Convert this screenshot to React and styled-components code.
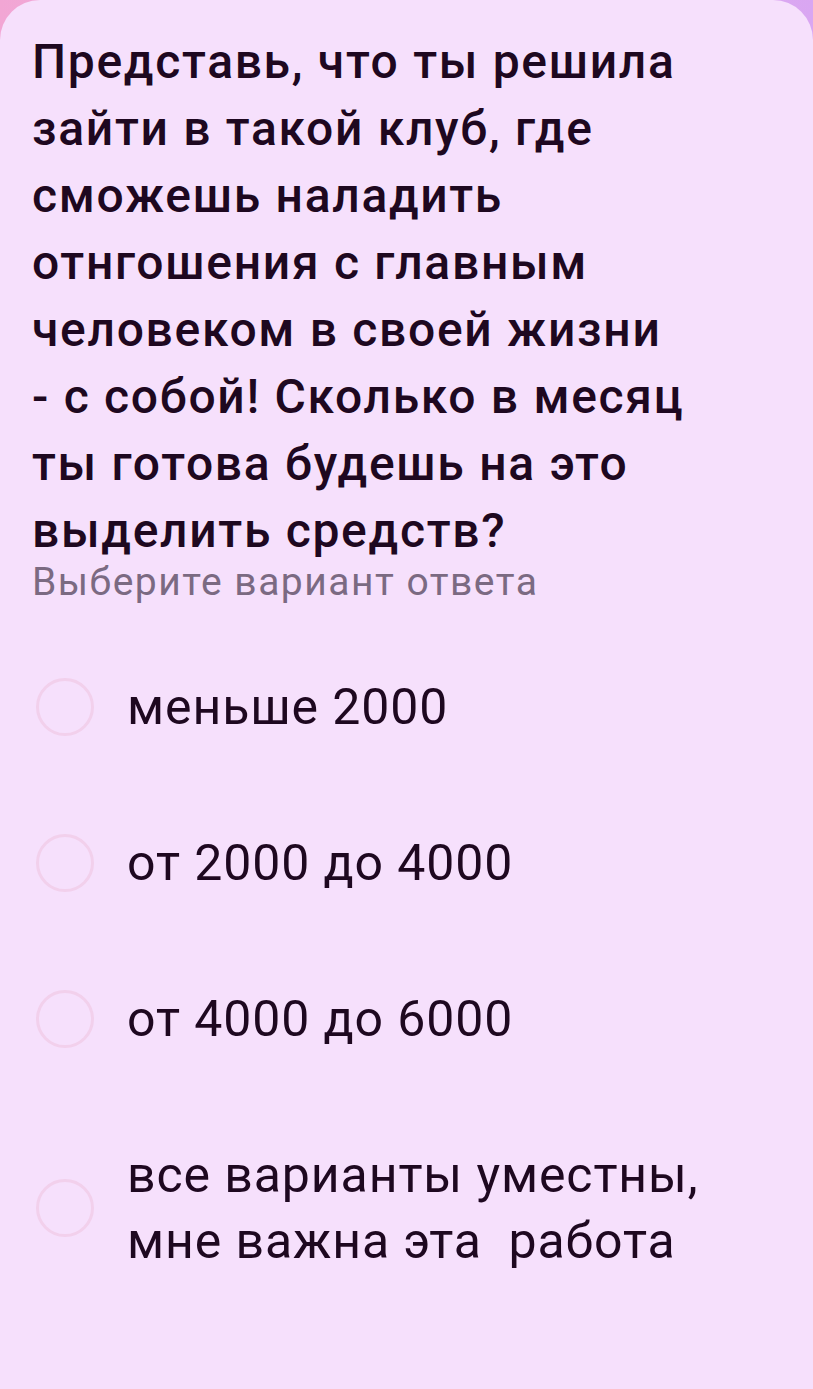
import React from 'react';
import styled, { createGlobalStyle } from 'styled-components';

const GlobalStyle = createGlobalStyle`
  html, body {
    margin: 0;
    padding: 0;
  }
  body {
    font-family: Roboto, "Noto Sans", "Liberation Sans", sans-serif;
    background: linear-gradient(90deg, #f2a6d4 0%, #e8b0e8 50%, #d9a6f2 100%);
  }
`;

const Page = styled.div`
  width: 813px;
  height: 1389px;
  overflow: hidden;
`;

const Card = styled.div`
  height: 100%;
  background: #f6e0fc;
  border-radius: 40px 40px 0 0;
  padding: 28px 32px 0 32px;
  box-sizing: border-box;
`;

const Question = styled.h1`
  margin: 0;
  font-size: 48px;
  font-weight: 500;
  line-height: 67px;
  color: #1e0820;
  letter-spacing: 1.7px;
`;

const Hint = styled.p`
  margin: 0;
  font-size: 39px;
  line-height: 36px;
  color: #7b6a82;
  letter-spacing: 1.5px;
`;

const Options = styled.div`
  display: flex;
  flex-direction: column;
  gap: 90px;
  margin-top: 74px;
`;

const Option = styled.label`
  display: flex;
  align-items: center;
  gap: 33px;
  cursor: pointer;
`;

const Radio = styled.span`
  flex: none;
  width: 58px;
  height: 58px;
  margin-left: 4px;
  border-radius: 50%;
  border: 3px solid #f2d0ec;
  box-sizing: border-box;
`;

const Label = styled.span`
  font-size: 50px;
  line-height: 66px;
  color: #1e0820;
  letter-spacing: 0.9px;
  white-space: pre-wrap;
`;

const answers = [
  'меньше 2000',
  'от 2000 до 4000',
  'от 4000 до 6000',
  'все варианты уместны,\nмне важна эта  работа',
];

export default function App() {
  return (
    <>
      <GlobalStyle />
      <Page>
        <Card>
          <Question>
            Представь, что ты решила<br />
            зайти в такой клуб, где<br />
            сможешь наладить<br />
            отнгошения с главным<br />
            человеком в своей жизни<br />
            - с собой! Сколько в месяц<br />
            ты готова будешь на это<br />
            выделить средств?
          </Question>
          <Hint>Выберите вариант ответа</Hint>
          <Options>
            {answers.map(a => (
              <Option key={a}>
                <Radio />
                <Label>{a}</Label>
              </Option>
            ))}
          </Options>
        </Card>
      </Page>
    </>
  );
}
